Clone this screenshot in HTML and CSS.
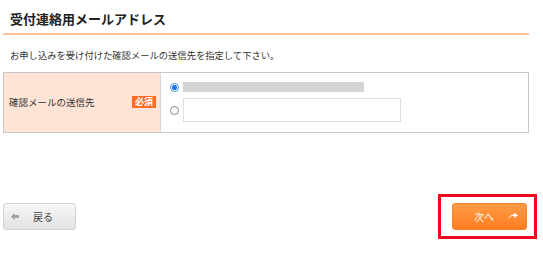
FILE: index.html
```html
<!DOCTYPE html>
<html lang="ja">
<head>
<meta charset="utf-8">
<link rel="stylesheet" href="styles.css">
</head>
<body>
<div class="wrap">
  <h2 class="title">受付連絡用メールアドレス</h2>
  <p class="desc">お申し込みを受け付けた確認メールの送信先を指定して下さい。</p>
  <div class="table">
    <div class="label">
      <span class="label-text">確認メールの送信先</span>
      <span class="badge">必須</span>
    </div>
    <div class="field">
      <div class="opt">
        <span class="radio checked"></span>
        <span class="masked"></span>
      </div>
      <div class="opt">
        <span class="radio"></span>
        <span class="input"></span>
      </div>
    </div>
  </div>
  <div class="actions">
    <button class="btn back">
      <svg class="ico-back" width="8" height="7" viewBox="0 0 8 7"><path d="M0 3.5 L3.5 0 L3.5 2 L8 2 L8 5 L3.5 5 L3.5 7 Z" fill="#a0a0a0"/></svg>
      <span>戻る</span>
    </button>
    <span class="frame">
      <button class="btn next">
        <span>次へ</span>
        <svg class="ico-next" width="10" height="7" viewBox="0 0 10 7"><path d="M0 7 C0.8 4 3 2.8 6 2.8 L6 5 L10 2.3 L6 -0.4 L6 1.5 C2.5 1.5 0.6 3.8 0 7 Z" fill="#fff"/></svg>
      </button>
    </span>
  </div>
</div>
</body>
</html>
```
FILE: styles.css
```css
* { box-sizing: border-box; }
html, body { margin: 0; padding: 0; background: #fff; }
body {
  font-family: "Noto Sans CJK JP", "Noto Sans", sans-serif;
  color: #333;
}
.wrap {
  width: 529px;
  padding-left: 3px;
}
.title {
  margin: 0;
  padding: 9px 0 4px 7px;
  font-size: 13px;
  line-height: 20px;
  font-weight: bold;
  color: #222;
  border-bottom: 2px solid #ffc29c;
}
.desc {
  margin: 13px 0 10px 7px;
  font-size: 9.3px;
  line-height: 14px;
  color: #333;
}
.table {
  display: flex;
  height: 61px;
  border: 1px solid #c8c8c8;
}
.label {
  width: 157px;
  background: #ffe3d4;
  border-right: 1px solid #d8d8d8;
  display: flex;
  align-items: center;
  justify-content: space-between;
  padding: 0 4px 2px 5px;
}
.label-text {
  font-size: 9.5px;
  color: #333;
}
.badge {
  background: #ff6a26;
  color: #fff;
  font-size: 9px;
  line-height: 12px;
  padding: 0 3px;
  font-weight: bold;
}
.field {
  flex: 1;
  padding: 9px 0 0 9px;
  display: flex;
  flex-direction: column;
  gap: 6px;
}
.opt {
  display: flex;
  align-items: center;
  gap: 4px;
}
.radio {
  width: 9px;
  height: 9px;
  border-radius: 50%;
  border: 1px solid #888;
  background: #fff;
  flex: none;
}
.radio.checked {
  border-color: #3a8ef6;
  background: radial-gradient(circle, #1a73e8 0 2.2px, #fff 2.6px);
}
.masked {
  width: 181px;
  height: 10px;
  background: #d4d4d4;
}
.input {
  width: 218px;
  height: 24px;
  border: 1px solid #e0e0e0;
  background: #fff;
}
.actions {
  margin-top: 61px;
  margin-right: -8px;
  display: flex;
  justify-content: space-between;
  align-items: center;
}
.btn {
  font-family: "Noto Sans CJK JP", "Noto Sans", sans-serif;
  border-radius: 3px;
  height: 27px;
  display: flex;
  align-items: center;
  cursor: pointer;
  padding: 0;
}
.back {
  width: 73px;
  margin-top: -1px;
  background: linear-gradient(#f7f7f7, #e2e2e2);
  border: 1px solid #d2d2d2;
  color: #444;
  font-size: 10px;
  padding-left: 7px;
  gap: 14px;
}
.frame {
  display: flex;
  border: 3px solid #ee0a1e;
  padding: 6px 7px 6px 11px;
}
.next {
  width: 75px;
  background: linear-gradient(#ff9c45, #ff7d22);
  border: 1px solid #f7852e;
  color: #fff;
  font-size: 10px;
  justify-content: space-between;
  padding: 0 8px 0 21px;
}
.ico-next { margin-top: -1px; }
```
